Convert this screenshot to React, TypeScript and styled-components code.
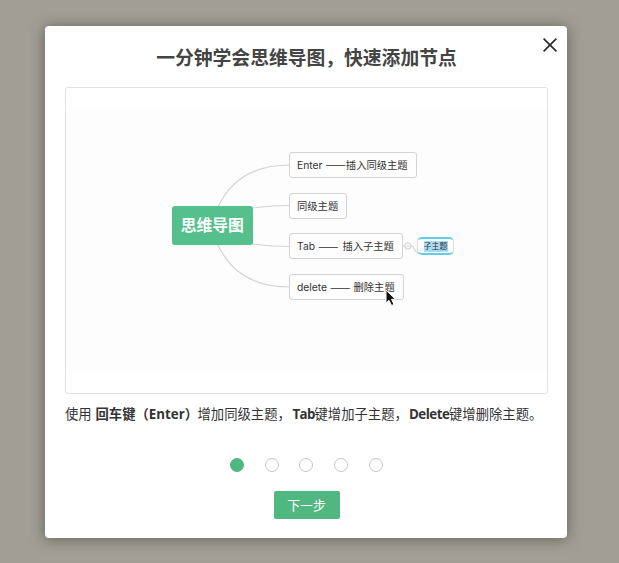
import React from "react";
import styled, { createGlobalStyle } from "styled-components";

const GlobalStyle = createGlobalStyle`
  * { box-sizing: border-box; }
  body { margin: 0; background: #a19e95; font-family: "Open Sans", "Noto Sans CJK SC", sans-serif; }
`;

const Backdrop = styled.div`
  height: 563px;
  padding: 26px 52px 0 45px;
  overflow: hidden;
  background: #a19e95;
`;

const Dialog = styled.section`
  position: relative;
  display: flex;
  flex-direction: column;
  align-items: center;
  height: 512px;
  padding: 19px 19px 0 20px;
  border-radius: 4px;
  background: #fff;
  box-shadow: 0 1px 14px rgba(40, 36, 24, 0.5);
`;

const Title = styled.h1`
  margin: 0 0 18px;
  height: 24px;
  line-height: 24px;
  font-family: "Noto Sans CJK SC", sans-serif;
  font-size: 18.8px;
  font-weight: 700;
  color: #444;
  white-space: nowrap;
`;

const CloseButton = styled.button`
  position: absolute;
  top: 11px;
  right: 9px;
  width: 16px;
  height: 16px;
  padding: 0;
  border: 0;
  background: none;
  svg { display: block; }
`;

const Preview = styled.div`
  width: 483px;
  height: 307px;
  padding: 20px 0 22px;
  border: 1px solid #e2e2e2;
  border-radius: 3px;
`;

const Canvas = styled.div`
  position: relative;
  width: 481px;
  height: 263px;
  background: #fdfdfd;
`;

const Links = styled.svg`
  position: absolute;
  left: 0;
  top: 1px;
`;

const Cursor = styled.svg`
  position: absolute;
  left: 318px;
  top: 181px;
`;

const Node = styled.div<{ $x: number; $y: number; $w: number }>`
  position: absolute;
  left: ${(p) => p.$x}px;
  top: ${(p) => p.$y}px;
  width: ${(p) => p.$w}px;
  height: 26px;
  padding-left: 7px;
  border: 1px solid #d3d3d3;
  border-radius: 3px;
  background: #fefefe;
  display: flex;
  align-items: center;
  font-family: "Inter", "Noto Sans CJK SC", sans-serif;
  font-size: 10.3px;
  line-height: 14px;
  color: #333;
  white-space: nowrap;
`;

const Dash = styled.span<{ $before: number; $after: number }>`
  font-family: "Noto Sans CJK SC", sans-serif;
  font-size: 12.2px;
  margin: -1px ${(p) => p.$after}px 0 ${(p) => p.$before}px;
`;

const RootNode = styled(Node)`
  height: 39px;
  padding: 0 0 0 0;
  border: 0;
  justify-content: center;
  background: #55c08c;
  color: #fff;
  font-size: 15.8px;
  font-weight: 700;
`;

const ChildNode = styled(Node)`
  height: 18px;
  padding: 0;
  justify-content: center;
  border-width: 2px 1px;
  border-color: #62cdea #ddd;
  border-radius: 5px;
  font-size: 8px;
  line-height: 11px;
  mark { background: #a9dcf2; color: #333; height: 11px; }
`;

const Hint = styled.p`
  display: flex;
  align-self: stretch;
  margin: 10px 0 0;
  height: 20px;
  line-height: 20px;
  font-size: 13.33px;
  color: #333;
  white-space: nowrap;
`;

const Key = styled.strong<{ $w: number; $track?: number }>`
  width: ${(p) => p.$w}px;
  font-weight: 700;
  letter-spacing: ${(p) => p.$track ?? 0}px;
`;

const Phrase = styled.span<{ $w: number }>`
  width: ${(p) => p.$w}px;
`;

const Steps = styled.div`
  display: flex;
  gap: 20.7px;
  margin-top: 34px;
  width: 153px;
`;

const Step = styled.span<{ $active?: boolean }>`
  flex: 0 0 14px;
  height: 14px;
  border-radius: 50%;
  border: 1px solid ${(p) => (p.$active ? "#50b781" : "#c6c6c6")};
  background: ${(p) => (p.$active ? "#50b781" : "#fff")};
`;

const NextButton = styled.button`
  width: 66px;
  height: 28px;
  margin-top: 19px;
  padding: 0;
  border: 0;
  border-radius: 2px;
  background: #50b781;
  color: #fff;
  font-family: "Noto Sans CJK SC", sans-serif;
  font-size: 12.8px;
  line-height: 28px;
`;

export default function App() {
  return (
    <Backdrop>
      <GlobalStyle />
      <Dialog>
        <CloseButton aria-label="关闭">
          <svg width="16" height="16" fill="none" stroke="#2c2828" strokeWidth="1.6">
            <path d="M1.6 1.6 14.4 14.4M14.4 1.6 1.6 14.4" />
          </svg>
        </CloseButton>
        <Title>一分钟学会思维导图，快速添加节点</Title>
        <Preview>
          <Canvas>
            <Links width="481" height="262" fill="none" stroke="#d2d2d2" strokeWidth="1.1">
              <path d="M152 98C164 72 186 56 224 56" />
              <path d="M186 99Q205 96.5 224 96.5" />
              <path d="M186 135Q205 137.5 224 137.5" />
              <path d="M152 136C164 162 186 178 224 178" />
              <path d="M337 137H339M345 137H346C349 137 347 144 353 144" />
              <circle cx="342" cy="137" r="3" />
              <path d="M340.5 137H343.5" />
            </Links>
            <RootNode $x={105.5} $y={98} $w={81.5}>思维导图</RootNode>
            <Node $x={223} $y={43.5} $w={128}>Enter<Dash $before={3} $after={0}>——</Dash>插入同级主题</Node>
            <Node $x={223} $y={84.5} $w={58}>同级主题</Node>
            <Node $x={223} $y={125} $w={114}>Tab<Dash $before={3} $after={4}>——</Dash>插入子主题</Node>
            <Node $x={223} $y={166} $w={115}>delete<Dash $before={3} $after={3}>——</Dash>删除主题</Node>
            <ChildNode $x={351} $y={129} $w={37}><mark>子主题</mark></ChildNode>
            <Cursor width="14" height="19" viewBox="0 0 14 19">
              <path d="M2 1V14L5 11.3 7.6 16.5 10 15.4 7.5 10.3H11.5Z" fill="#111" stroke="#fff" />
            </Cursor>
          </Canvas>
        </Preview>
        <Hint>
          <Phrase $w={30.5}>使用</Phrase>
          <Key $w={102}>回车键（Enter）</Key>
          <Phrase $w={95}>增加同级主题，</Phrase>
          <Key $w={22} $track={-0.6}>Tab</Key>
          <Phrase $w={94.5}>键增加子主题，</Phrase>
          <Key $w={40} $track={-0.5}>Delete</Key>
          <Phrase $w={96}>键增删除主题。</Phrase>
        </Hint>
        <Steps>
          <Step $active />
          <Step />
          <Step />
          <Step />
          <Step />
        </Steps>
        <NextButton>下一步</NextButton>
      </Dialog>
    </Backdrop>
  );
}
